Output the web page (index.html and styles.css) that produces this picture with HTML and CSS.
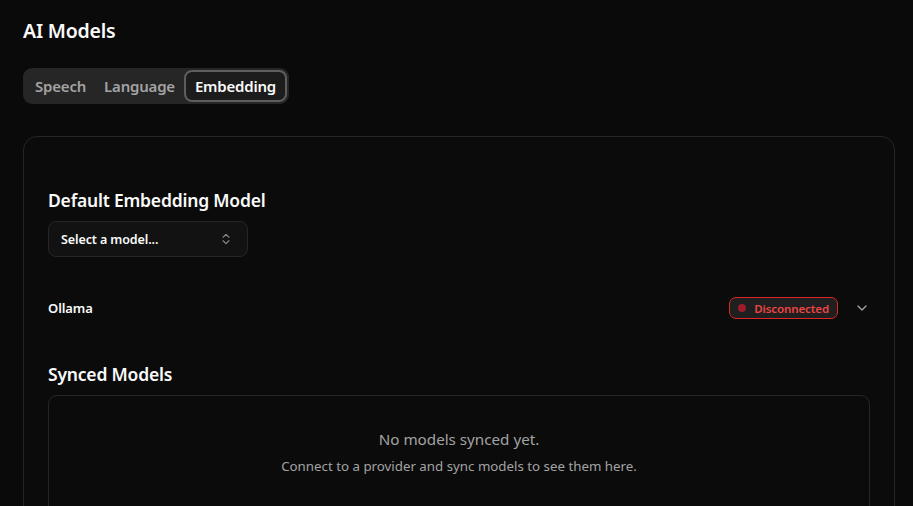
FILE: index.html
```html
<!DOCTYPE html>
<html lang="en">
<head>
<meta charset="utf-8">
<title>AI Models</title>
<link rel="stylesheet" href="styles.css">
</head>
<body>
<main class="page">
  <h1 class="title">AI Models</h1>
  <div class="tabs">
    <button class="tab">Speech</button>
    <button class="tab">Language</button>
    <button class="tab active">Embedding</button>
  </div>
  <section class="card">
    <h2 class="section-title">Default Embedding Model</h2>
    <button class="select">
      <span>Select a model...</span>
      <svg class="select-icon" width="14" height="14" viewBox="0 0 24 24" fill="none" stroke="currentColor" stroke-width="2" stroke-linecap="round" stroke-linejoin="round"><path d="m7 15 5 5 5-5"/><path d="m7 9 5-5 5 5"/></svg>
    </button>
    <div class="provider">
      <span class="provider-name">Ollama</span>
      <div class="provider-right">
        <span class="badge"><span class="dot"></span>Disconnected</span>
        <svg class="chev" width="16" height="16" viewBox="0 0 24 24" fill="none" stroke="currentColor" stroke-width="2" stroke-linecap="round" stroke-linejoin="round"><path d="m6 9 6 6 6-6"/></svg>
      </div>
    </div>
    <h2 class="section-title synced">Synced Models</h2>
    <div class="empty">
      <p class="empty-title">No models synced yet.</p>
      <p class="empty-sub">Connect to a provider and sync models to see them here.</p>
    </div>
  </section>
</main>
</body>
</html>
```
FILE: styles.css
```css
* { box-sizing: border-box; }
html, body { margin: 0; padding: 0; background: #0a0a0a; }
body {
  font-family: "Noto Sans", "Open Sans", sans-serif;
  color: #fafafa;
  overflow: hidden;
  height: 506px;
}
.page {
  padding: 17px 18px 0 23px;
}
.title {
  margin: 0;
  font-size: 19.5px;
  font-weight: 600;
  line-height: 28px;
  letter-spacing: -0.2px;
}
.tabs {
  display: inline-flex;
  margin-top: 23px;
  background: #262626;
  border-radius: 9px;
  padding: 2px 2px 2px 3px;
}
.tab {
  font-family: inherit;
  font-size: 15px;
  font-weight: 600;
  color: #a3a3a3;
  background: transparent;
  border: 2px solid transparent;
  border-radius: 8px;
  padding: 0 7px;
  height: 32px;
  letter-spacing: -0.2px;
}
.tab.active {
  color: #fafafa;
  background: #1c1c1c;
  border-color: #5e5e5e;
  padding: 0 9px;
}
.card {
  margin-top: 32px;
  border: 1px solid #262626;
  border-radius: 14px;
  background: #0b0b0b;
  padding: 51px 24px 40px 24px;
  height: 420px;
}
.section-title {
  margin: 0;
  font-size: 17.5px;
  font-weight: 600;
  line-height: 24px;
  letter-spacing: -0.2px;
}
.select {
  margin-top: 9px;
  width: 200px;
  height: 36px;
  display: flex;
  align-items: center;
  justify-content: space-between;
  padding: 0 14px 0 12px;
  background: #121212;
  border: 1px solid #262626;
  border-radius: 8px;
  color: #fafafa;
  font-family: inherit;
  font-size: 12.5px;
  font-weight: 600;
  letter-spacing: -0.1px;
}
.select-icon { color: #8a8a8a; }
.provider {
  margin-top: 39px;
  display: flex;
  align-items: center;
  justify-content: space-between;
  height: 24px;
}
.provider-name {
  font-size: 13px;
  font-weight: 600;
  letter-spacing: -0.1px;
}
.provider-right {
  display: flex;
  align-items: center;
  gap: 16px;
  padding-right: 0;
}
.badge {
  display: inline-flex;
  align-items: center;
  gap: 8px;
  height: 22px;
  padding: 0 8px 0 8px;
  border: 1px solid #dc2626;
  border-radius: 7px;
  background: #1f1f1f;
  color: #ef4444;
  font-size: 11.5px;
  font-weight: 600;
  letter-spacing: -0.1px;
}
.dot {
  width: 8px;
  height: 8px;
  border-radius: 50%;
  background: #9b1c2a;
}
.chev { color: #a3a3a3; }
.synced { margin-top: 42px; }
.empty {
  margin-top: 9px;
  border: 1px solid #262626;
  border-radius: 9px;
  height: 140px;
  padding-top: 32px;
  text-align: center;
}
.empty p { margin: 0; }
.empty-title {
  font-size: 15.2px;
  color: #a3a3a3;
  line-height: 22px;
}
.empty-sub {
  margin-top: 6px !important;
  font-size: 13.3px;
  color: #a3a3a3;
  line-height: 20px;
}
```
